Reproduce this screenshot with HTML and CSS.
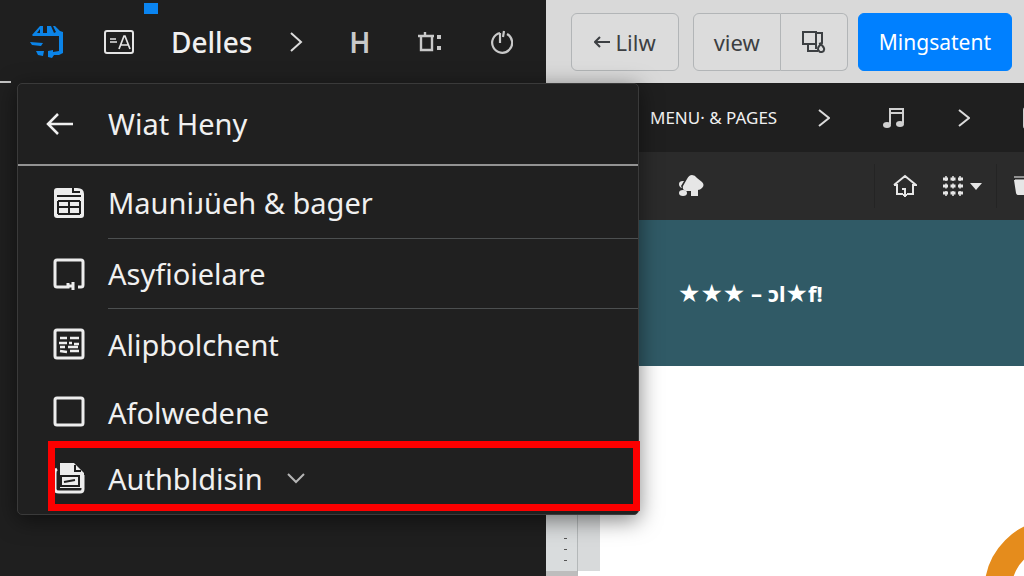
FILE: index.html
```html
<!DOCTYPE html>
<html lang="en">

<head>
    <meta charset="UTF-8">
    <title>Delles</title>
    <link rel="stylesheet" href="styles.css">
</head>

<body>
    <div class="app">
        <aside class="sidebar">
            <header class="sidebar-bar">
                <button class="icon-btn logo" aria-label="Home">
                    <svg width="38" height="36" viewBox="0 0 38 36" fill="#0b84e8">
                        <path d="M3 11 L11 2 H14 V9 H18 V2 H22 L25 9 L27 8 L24 2 H26 L31 7 L34 8 V29 L30 31 H25 L23 34 L19 33 V27 L24 26 V28 L30 27 V12 H4 Z" />
                        <path d="M1 18 L14 19 L12 22 L3 21 Z M7 27 H15 L14 32 L9 31 Z" />
                        <path d="M8 9 L11 5 V9 Z" fill="#1f1f1f" />
                    </svg>
                </button>
                <button class="icon-btn badge-host" aria-label="Text block">
                    <svg width="30" height="24" viewBox="0 0 30 24" fill="none" stroke="#e4e4e4" stroke-width="2">
                        <rect x="1" y="1" width="28" height="22" rx="2" />
                        <path d="M6 9 H12 M6 12 H13 M15 19 L20 6 H21 L26 19 M16 15 H25" stroke-width="1.7" />
                    </svg>
                    <span class="badge"></span>
                </button>
                <h1>Delles</h1>
                <svg class="chevron" width="14" height="22" viewBox="0 0 14 22"><path d="M2 2 L12 11 L2 20" /></svg>
                <div class="tools">
                    <button class="icon-btn heading-btn">H</button>
                    <button class="icon-btn" aria-label="Crop">
                        <svg width="24" height="22" viewBox="0 0 24 22" fill="none" stroke="#c9c9c9" stroke-width="2.4">
                            <path d="M0 5 H16 M3 5 V19 H14 V5 M7 5 V1" />
                            <path d="M19 6 H23 M19 17 H23" stroke-width="4" />
                        </svg>
                    </button>
                    <button class="icon-btn" aria-label="Power">
                        <svg width="24" height="24" viewBox="0 0 24 24" fill="none" stroke="#c9c9c9" stroke-width="2.2">
                            <path d="M11 3 A10 10 0 1 0 18 4 M11 3 V13 M14 7 L15 1" />
                        </svg>
                    </button>
                </div>
            </header>
        </aside>

        <main class="editor">
            <div class="actions">
                <button class="btn">
                    <svg width="16" height="12" viewBox="0 0 16 12" fill="none" stroke="#3c3f42" stroke-width="2"><path d="M6 1 L1 6 L6 11 M1 6 H16" /></svg>
                    Lilw
                </button>
                <div class="btn-group">
                    <button class="btn">view</button>
                    <button class="btn" aria-label="Devices">
                        <svg width="24" height="24" viewBox="0 0 24 24" fill="none" stroke="#3c3f42" stroke-width="2">
                            <path d="M1 2 H14 V14 H1 Z M14 3 H20 V13 L17 14 M14 14 V19 M6 14 V21 H16" />
                            <path d="M19 14 C16 17 15 19 17 21 C18 23 22 22 22 20 C23 18 21 17 19 14 Z" />
                        </svg>
                    </button>
                </div>
                <button class="btn primary">Mingsatent</button>
            </div>

            <nav class="crumbs">
                <a href="#">MENU· &amp; PAGES</a>
                <svg class="chevron" width="12" height="20" viewBox="0 0 12 20"><path d="M1 2 L11 10 L1 18" /></svg>
                <svg width="22" height="22" viewBox="0 0 22 22">
                    <path d="M7 17 V2 H20 V16 M7 6 H20" fill="none" stroke="#d0d0d0" stroke-width="2" />
                    <ellipse cx="4" cy="18" rx="4" ry="3" fill="#d0d0d0" />
                    <ellipse cx="17" cy="17" rx="4" ry="3" fill="#d0d0d0" />
                </svg>
                <svg class="chevron" width="12" height="20" viewBox="0 0 12 20"><path d="M1 2 L11 10 L1 18" /></svg>
                <svg width="5" height="22" viewBox="0 0 5 22"><rect x="1" y="1" width="20" height="20" rx="2" fill="none" stroke="#d0d0d0" stroke-width="2" /></svg>
            </nav>

            <div class="toolbar">
                <button class="icon-btn" aria-label="Site">
                    <svg width="26" height="24" viewBox="0 0 26 24" fill="#e6e6e6">
                        <path d="M14 1 Q17 1 19 4 L24 8 Q27 11 24 14 Q22 16 20 16 V22 H13 V17 H8 Q4 16 5 12 L9 5 Q11 1 14 1 Z" />
                        <path d="M5 7 Q1 7 1 10 Q1 13 4 14 L3 12 L6 7 Z" />
                        <ellipse cx="5" cy="19" rx="4" ry="3" />
                    </svg>
                </button>
                <div class="toolbar-group">
                    <button class="icon-btn" aria-label="Start page">
                        <svg width="24" height="24" viewBox="0 0 24 24" fill="none" stroke="#e6e6e6" stroke-width="2">
                            <path d="M1 11 L12 2 L23 11 H20 V20 H14 M1 11 H4 V20 H10 M12 23 V15 H9 M10 21 H14" />
                        </svg>
                    </button>
                    <button class="icon-btn grid-btn" aria-label="Grid">
                        <svg width="20" height="20" viewBox="0 0 20 20" fill="none" stroke="#e6e6e6">
                            <path d="M0 3 H20 M0 10 H20 M0 17 H20" stroke-width="3" stroke-dasharray="5 2.5" />
                            <path d="M3 0 V20 M10 0 V20 M17 0 V20" stroke-width="1.5" stroke-dasharray="5 2.5" />
                        </svg>
                        <svg width="14" height="9" viewBox="0 0 14 9" fill="#e6e6e6"><path d="M1 1 H13 L7 8 Z" /></svg>
                    </button>
                </div>
                <button class="icon-btn bin" aria-label="Delete">
                    <svg width="11" height="22" viewBox="0 0 11 22">
                        <path d="M1 2 H22 M2 5 H22" stroke="#b5b5b5" stroke-width="1.5" />
                        <path d="M1 5 H22 V20 H6 Q3 20 3 18 Z" fill="#e6e6e6" />
                    </svg>
                </button>
            </div>

            <section class="hero">
                <p><span class="stars">★★★</span> – ɔl<span class="stars">★</span>f!</p>
            </section>

            <section class="canvas">
                <div class="gutter">
                    <div class="ruler"><i></i><i></i><i></i></div>
                    <div class="ruler-side"></div>
                </div>
                <svg class="ring" width="40" height="54" viewBox="0 0 40 54"><circle cx="71" cy="68" r="57" fill="none" stroke="#e58c1c" stroke-width="27" /></svg>
            </section>
        </main>

        <nav class="menu">
            <div class="menu-header">
                <button class="icon-btn" aria-label="Back">
                    <svg width="28" height="24" viewBox="0 0 28 24" fill="none" stroke="#f0f0f0" stroke-width="2.5"><path d="M12 2 L2 12 L12 22 M2 12 H27" /></svg>
                </button>
                <h2>Wiat Heny</h2>
            </div>
            <a class="menu-item first" href="#">
                <svg width="32" height="32" viewBox="0 0 32 32">
                    <path d="M4 1 H24 Q31 1 31 7 V28 Q31 31 28 31 H4 Q1 31 1 28 V4 Q1 1 4 1 Z" fill="#ededed" />
                    <path d="M20 1 V5 H27 M4 9 H28 M5 14 H27 M5 20 H27 M5 27 H27 M5 14 V27 M16 15 V27 M27 14 V27" fill="none" stroke="#1f1f1f" stroke-width="2" />
                </svg>
                <span class="label">Mauniᴊüeh &amp; bager</span>
            </a>
            <a class="menu-item lined" href="#">
                <svg width="32" height="32" viewBox="0 0 32 32" fill="none" stroke="#ededed" stroke-width="3">
                    <path d="M12 29 H4 Q2 29 2 27 V4 Q2 2 4 2 H28 Q30 2 30 4 V27 Q30 29 28 29 H25 M15 25 V29 H12" />
                    <path d="M20 24 V32 M16 28 H20" />
                </svg>
                <span class="label">Asyfioielare</span>
            </a>
            <a class="menu-item lined plain" href="#">
                <svg width="32" height="32" viewBox="0 0 32 32" fill="none" stroke="#ededed" stroke-width="3">
                    <rect x="2" y="2" width="28" height="28" rx="2" />
                    <path d="M7 10 H14 M17 10 H26 M6 15 H14 M16 15 H19 M21 16 H26 M7 19 H12 M15 19 H25 M7 23 L14 24 M17 23 H26" stroke-width="2.6" />
                </svg>
                <span class="label">Alipbolchent</span>
            </a>
            <a class="menu-item plain" href="#">
                <svg width="32" height="32" viewBox="0 0 32 32" fill="none" stroke="#ededed" stroke-width="3"><rect x="2" y="2" width="28" height="27" rx="2" /></svg>
                <span class="label">Afolwedene</span>
            </a>
            <a class="menu-item plain selected" href="#">
                <svg width="32" height="32" viewBox="0 0 32 32">
                    <path d="M4 7 Q2 8 2 11 V27 Q2 30 6 30 H27 Q30 30 30 27 V13" fill="none" stroke="#ededed" stroke-width="3" />
                    <path d="M7 1 H21 L31 11 V26 H7 Z" fill="#ededed" />
                    <path d="M22 3 V9 H28 M8 14 H26 V24 H8 Z M11 20 L22 18" fill="none" stroke="#1f1f1f" stroke-width="2" />
                </svg>
                <span class="label">Authbldisin
                    <svg class="down" width="18" height="11" viewBox="0 0 18 11"><path d="M1 1 L9 9 L17 1" /></svg>
                </span>
            </a>
        </nav>
    </div>
</body>

</html>
```
FILE: styles.css
```css
* {
    box-sizing: border-box;
}

body {
    margin: 0;
    font-family: "Noto Sans", "Open Sans", sans-serif;
    background: #1f1f1f;
    color: #f0f0f0;
}

h1,
h2,
p {
    margin: 0;
}

a {
    color: inherit;
    text-decoration: none;
}

button {
    font-family: inherit;
    cursor: pointer;
}

svg {
    display: block;
    flex-shrink: 0;
}

.app {
    position: relative;
    display: grid;
    grid-template-columns: 546px 1fr;
    min-height: 100vh;
    overflow: hidden;
}

.icon-btn {
    display: flex;
    align-items: center;
    padding: 0;
    border: none;
    background: none;
    color: #c9c9c9;
}

.chevron {
    fill: none;
    stroke: #dcdcdc;
    stroke-width: 2;
}

/* left side */
.sidebar-bar {
    position: relative;
    display: flex;
    align-items: center;
    gap: 37px;
    height: 83px;
    padding-left: 29px;
}

.sidebar-bar::after {
    content: "";
    position: absolute;
    left: 0;
    bottom: 0;
    width: 11px;
    height: 2px;
    background: #c4c4c4;
}

.sidebar-bar h1 {
    font-size: 28px;
    line-height: 36px;
    font-weight: 500;
}

.badge-host {
    position: relative;
}

.badge {
    position: absolute;
    top: -27px;
    right: -24px;
    width: 14px;
    height: 11px;
    background: #0a84f0;
}

.tools {
    display: flex;
    align-items: center;
    gap: 47px;
    margin-left: 9px;
}

.heading-btn {
    font-size: 28px;
    line-height: 36px;
    font-weight: 600;
}

/* right side */
.editor {
    display: flex;
    flex-direction: column;
    min-width: 0;
}

.actions {
    display: flex;
    align-items: center;
    justify-content: flex-end;
    height: 83px;
    padding-right: 12px;
    background: #d9d9d9;
}

.btn {
    display: flex;
    align-items: center;
    gap: 6px;
    height: 58px;
    padding: 0 22px;
    border: 1px solid #b2b5b7;
    border-radius: 6px;
    background: #dcdcdc;
    color: #3c3f42;
    font-size: 22px;
}

.btn-group {
    display: flex;
    margin: 0 10px 0 14px;
}

.btn-group .btn {
    padding: 0 20px;
}

.btn-group .btn:first-child {
    border-radius: 6px 0 0 6px;
}

.btn-group .btn:last-child {
    padding: 0 21px;
    border-left: none;
    border-radius: 0 6px 6px 0;
}

.btn.primary {
    padding: 0 20px;
    border-color: #0080ff;
    background: #0080ff;
    color: #fff;
    font-size: 21px;
}

.crumbs {
    display: flex;
    align-items: center;
    gap: 53px;
    height: 69px;
    padding-left: 104px;
    background: #1f1f1f;
    font-size: 17px;
    white-space: nowrap;
}

.crumbs a {
    margin-right: -12px;
}

.toolbar {
    display: flex;
    align-items: center;
    height: 68px;
    padding-left: 132px;
    background: #2b2b2b;
}

.toolbar-group {
    display: flex;
    align-items: center;
    gap: 26px;
    height: 44px;
    margin-left: auto;
    padding: 0 13px 0 18px;
    border-left: 1px solid #242424;
    border-right: 1px solid #242424;
}

.grid-btn {
    gap: 6px;
}

.bin {
    margin-left: 16px;
}

.hero {
    display: flex;
    align-items: center;
    height: 146px;
    padding-left: 132px;
    background: #305a66;
    color: #fff;
    font-size: 22px;
    font-weight: 700;
}

.stars {
    font-family: "DejaVu Sans", sans-serif;
    font-size: 25px;
    font-weight: 400;
}

.canvas {
    flex: 1;
    display: flex;
    align-items: stretch;
    justify-content: space-between;
    min-height: 210px;
    background: #fff;
}

.gutter {
    display: flex;
    width: 54px;
}

.ruler {
    flex: 1;
    display: flex;
    flex-direction: column;
    align-items: center;
    justify-content: flex-end;
    gap: 10px;
    padding: 0 0 10px 8px;
    border-right: 1px solid #b4b8b9;
    border-bottom: 5px solid #bdbdbd;
    background: #d9dcdd;
}

.ruler i {
    width: 3px;
    height: 1px;
    background: #555;
}

.ruler-side {
    width: 22px;
    margin-bottom: 5px;
    background: #d8dadb;
}

.ring {
    align-self: flex-end;
}

/* floating menu */
.menu {
    position: absolute;
    top: 83px;
    left: 17px;
    width: 622px;
    padding-bottom: 3px;
    border: 1px solid #3a3a3a;
    border-radius: 5px;
    background: #202020;
    box-shadow: 0 5px 22px rgba(0, 0, 0, 0.5);
}

.menu-header {
    display: flex;
    align-items: center;
    gap: 34px;
    height: 82px;
    padding-left: 28px;
    border-bottom: 2px solid #939393;
}

.menu-header h2 {
    font-size: 29px;
    line-height: 40px;
    font-weight: 400;
}

.menu-item {
    position: relative;
    display: flex;
    align-items: center;
    gap: 23px;
    height: 66px;
    padding-left: 35px;
    font-size: 29px;
}

.menu-item .label {
    flex: 1;
    display: flex;
    align-items: center;
    align-self: stretch;
    gap: 24px;
    border-bottom: 1px solid #4c4f50;
}

.menu-item.first {
    height: 73px;
}

.menu-item.lined {
    height: 70px;
}

.menu-item.plain .label {
    border-bottom: none;
}

.menu-item.selected::before {
    content: "";
    position: absolute;
    top: -4px;
    right: -2px;
    bottom: 0;
    left: 30px;
    border: 7px solid #fc0000;
}

.down {
    fill: none;
    stroke: #b5b5b5;
    stroke-width: 2;
}
```
